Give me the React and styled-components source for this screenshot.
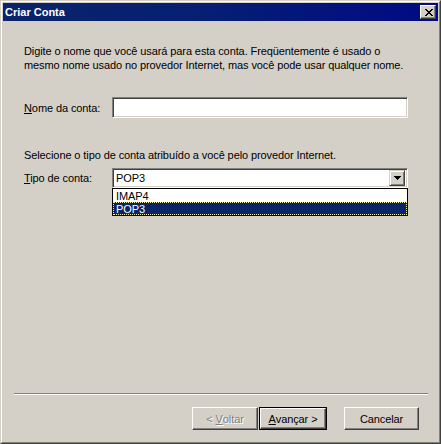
import React from 'react';
import styled, { createGlobalStyle } from 'styled-components';

const GlobalStyle = createGlobalStyle`
  html, body {
    margin: 0;
    padding: 0;
    background: #d4d0c8;
  }
  body {
    font-family: Tahoma, 'Liberation Sans', Arial, sans-serif;
    font-size: 11px;
    letter-spacing: -0.1px;
    color: #000;
  }
`;

const Window = styled.div`
  box-sizing: border-box;
  width: 441px;
  height: 444px;
  background: #d4d0c8;
  border: 1px solid;
  border-color: #d4d0c8 #404040 #404040 #d4d0c8;
  display: flex;
`;

const Frame = styled.div`
  flex: 1;
  border: 1px solid;
  border-color: #ffffff #808080 #808080 #ffffff;
  padding: 1px;
  display: flex;
  flex-direction: column;
`;

const TitleBar = styled.div`
  height: 18px;
  display: flex;
  align-items: center;
  justify-content: space-between;
  padding: 0 2px 0 2px;
  background: linear-gradient(90deg, #0a246a 0%, #061f72 45%, #000a84 100%);
  color: #fff;
  font-weight: bold;
  font-size: 11px;
  letter-spacing: 0;
`;

const CloseButton = styled.div`
  box-sizing: border-box;
  width: 16px;
  height: 14px;
  background: #d4d0c8;
  border: 1px solid;
  border-color: #ffffff #404040 #404040 #ffffff;
  box-shadow: inset -1px -1px #808080;
  display: flex;
  align-items: center;
  justify-content: center;
  padding-left: 1px;
`;

const Body = styled.div`
  flex: 1;
  display: flex;
  flex-direction: column;
  margin-top: 1px;
`;

const Content = styled.div`
  padding: 19px 30px 0 21px;
`;

const Intro = styled.p`
  margin: ${p => p.$top || 0}px 0 0 0;
  line-height: 14px;
  white-space: nowrap;
`;

const FieldRow = styled.div`
  display: grid;
  grid-template-columns: 88px 296px;
  align-items: center;
  margin-top: ${p => p.$top}px;
`;

const Label = styled.span`
  u {
    text-decoration: underline;
  }
`;

const Sunken = styled.div`
  box-sizing: border-box;
  height: ${p => p.$h}px;
  background: #fff;
  border: 1px solid;
  border-color: #808080 #ffffff #ffffff #808080;
  box-shadow: inset 1px 1px #404040, inset -1px -1px #d4d0c8;
`;

const Combo = styled(Sunken)`
  position: relative;
  display: flex;
  align-items: center;
  justify-content: space-between;
  padding: 2px 2px 2px 3px;
`;

const ArrowButton = styled.div`
  box-sizing: border-box;
  width: 16px;
  height: 16px;
  background: #d4d0c8;
  border: 1px solid;
  border-color: #d4d0c8 #404040 #404040 #d4d0c8;
  box-shadow: inset 1px 1px #ffffff, inset -1px -1px #808080;
  display: flex;
  align-items: center;
  justify-content: center;
`;

const DropList = styled.div`
  position: absolute;
  left: -1px;
  right: -1px;
  top: calc(100% + 1px);
  background: #fff;
  border: 1px solid #000;
  z-index: 2;
`;

const Option = styled.div`
  box-sizing: border-box;
  height: 13px;
  line-height: 12px;
  padding-left: 2px;
  background: ${p => (p.$selected ? '#0a246a' : '#fff')};
  color: ${p => (p.$selected ? '#fff' : '#000')};
  border: 1px dotted ${p => (p.$selected ? '#f0f0a0' : 'transparent')};
`;

const Footer = styled.div`
  margin-top: auto;
  padding: 0 10px 11px 11px;
`;

const Separator = styled.div`
  border-top: 1px solid #808080;
  border-bottom: 1px solid #ffffff;
`;

const ButtonRow = styled.div`
  display: flex;
  justify-content: flex-end;
  margin-top: 12px;
  padding-right: 9px;
`;

const Button = styled.div`
  box-sizing: border-box;
  width: ${p => p.$w}px;
  height: ${p => p.$h || 23}px;
  margin-left: ${p => p.$gap || 0}px;
  display: flex;
  align-items: center;
  justify-content: center;
  background: #d4d0c8;
  border: 1px solid;
  border-color: #ffffff #404040 #404040 #ffffff;
  box-shadow: inset -1px -1px #808080, inset 1px 1px #d4d0c8;
  color: ${p => (p.$disabled ? '#808080' : '#000')};
  text-shadow: ${p => (p.$disabled ? '1px 1px #ffffff' : 'none')};
  white-space: pre;
  u {
    text-decoration: underline;
  }
`;

const DefaultFrame = styled.div`
  box-sizing: border-box;
  border: 1px solid #000;
  display: flex;
  margin-left: 1px;
`;

const xRows = [
  [0, 2, 6, 2],
  [1, 2, 5, 2],
  [2, 4],
  [3, 2],
  [2, 4],
  [1, 2, 5, 2],
  [0, 2, 6, 2],
];

const CloseGlyph = () => (
  <svg width="8" height="7" viewBox="0 0 8 7" shapeRendering="crispEdges">
    {xRows.map((r, y) => (
      <g key={y}>
        <rect x={r[0]} y={y} width={r[1]} height="1" fill="#000" />
        {r.length > 2 && <rect x={r[2]} y={y} width={r[3]} height="1" fill="#000" />}
      </g>
    ))}
  </svg>
);

const ArrowGlyph = () => (
  <svg width="7" height="4" viewBox="0 0 7 4" shapeRendering="crispEdges">
    <rect x="0" y="0" width="7" height="1" fill="#000" />
    <rect x="1" y="1" width="5" height="1" fill="#000" />
    <rect x="2" y="2" width="3" height="1" fill="#000" />
    <rect x="3" y="3" width="1" height="1" fill="#000" />
  </svg>
);

const App = () => {
  const tipos = ['IMAP4', 'POP3'];
  const selecionado = 'POP3';

  return (
    <>
      <GlobalStyle />
      <Window>
        <Frame>
          <TitleBar>
            <span>Criar Conta</span>
            <CloseButton>
              <CloseGlyph />
            </CloseButton>
          </TitleBar>

          <Body>
            <Content>
              <Intro $top={3}>
                Digite o nome que você usará para esta conta. Freqüentemente é usado o
                <br />
                mesmo nome usado no provedor Internet, mas você pode usar qualquer nome.
              </Intro>

              <FieldRow $top={25}>
                <Label><u>N</u>ome da conta:</Label>
                <Sunken $h={21} />
              </FieldRow>

              <Intro $top={30}>Selecione o tipo de conta atribuído a você pelo provedor Internet.</Intro>

              <FieldRow $top={6}>
                <Label><u>T</u>ipo de conta:</Label>
                <Combo $h={20}>
                  <span>{selecionado}</span>
                  <ArrowButton>
                    <ArrowGlyph />
                  </ArrowButton>
                  <DropList>
                    {tipos.map(t => (
                      <Option key={t} $selected={t === selecionado}>{t}</Option>
                    ))}
                  </DropList>
                </Combo>
              </FieldRow>
            </Content>

            <Footer>
              <Separator />
              <ButtonRow>
                <Button $w={66} $disabled>{'< '}<u>V</u>oltar</Button>
                <DefaultFrame>
                  <Button $w={66} $h={21}><u>A</u>vançar{' >'}</Button>
                </DefaultFrame>
                <Button $w={75} $gap={17}>Cancelar</Button>
              </ButtonRow>
            </Footer>
          </Body>
        </Frame>
      </Window>
    </>
  );
};

export default App;
